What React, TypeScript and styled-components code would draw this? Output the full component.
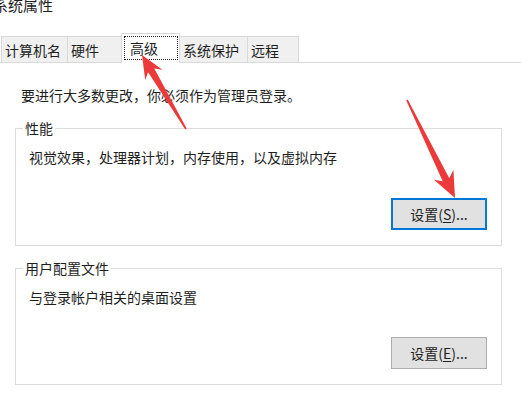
import React from "react";
import styled, { createGlobalStyle } from "styled-components";

const GlobalStyle = createGlobalStyle`
  * {
    box-sizing: border-box;
    margin: 0;
    padding: 0;
  }
  html, body {
    background: #ffffff;
  }
  body {
    margin: 0;
    font-family: "Noto Sans CJK SC", "Microsoft YaHei", sans-serif;
    color: #1e1e1e;
  }
`;

const Window = styled.div`
  position: relative;
  width: 521px;
  height: 393px;
  overflow: hidden;
  background: #ffffff;
  display: flex;
  flex-direction: column;
`;

const Title = styled.div`
  height: 36px;
  margin-top: -3px;
  margin-left: -7px;
  font-size: 15px;
  line-height: 15px;
  white-space: nowrap;
`;

const TabStrip = styled.div`
  display: flex;
  align-items: flex-end;
  height: 30px;
  padding-left: 1px;
  margin-bottom: -1px;
  position: relative;
  z-index: 1;
`;

const Tab = styled.div<{ $active?: boolean; $w: number }>`
  width: ${p => p.$w}px;
  height: ${p => (p.$active ? 30 : 26)}px;
  margin-bottom: ${p => (p.$active ? 0 : 1)}px;
  display: flex;
  align-items: ${p => (p.$active ? "flex-start" : "center")};
  padding: ${p => (p.$active ? "2px 0 0 2px" : "0 0 0 3px")};
  font-size: 14px;
  line-height: 14px;
  white-space: nowrap;
  background: ${p => (p.$active ? "#ffffff" : "#f0f0f0")};
  border: 1px solid #d9d9d9;
  border-bottom: none;
  & + & {
    margin-left: -1px;
  }
`;

const FocusRect = styled.span`
  width: 54px;
  height: 24px;
  border: 1px dotted #222;
  display: flex;
  align-items: center;
  padding-left: 5px;
`;

const Panel = styled.div`
  flex: 1;
  border-top: 1px solid #d9d9d9;
  padding: 25px 19px 0 15px;
`;

const Intro = styled.p`
  font-size: 14px;
  line-height: 14px;
  padding-left: 6px;
  margin-bottom: 19px;
  white-space: nowrap;
`;

const Group = styled.fieldset`
  border: 1px solid #dcdcdc;
  padding: 15px 14px 15px 13px;
  min-width: 0;
  & + & {
    margin-top: 15px;
  }
`;

const Legend = styled.legend`
  font-size: 14px;
  line-height: 14px;
  padding: 0 2px;
  margin-left: -6px;
`;

const Desc = styled.p`
  font-size: 14px;
  line-height: 14px;
  white-space: nowrap;
`;

const ButtonRow = styled.div<{ $gap: number }>`
  display: flex;
  justify-content: flex-end;
  margin-top: ${p => p.$gap}px;
`;

const Button = styled.button<{ $focused?: boolean }>`
  width: 96px;
  height: 32px;
  font-family: inherit;
  font-size: 14px;
  line-height: 14px;
  color: #1e1e1e;
  background: #e1e1e1;
  border: ${p => (p.$focused ? "2px solid #0078d7" : "1px solid #adadad")};
  display: flex;
  align-items: center;
  justify-content: center;
  u {
    text-decoration: underline;
    text-underline-offset: 2px;
  }
`;

const Overlay = styled.svg`
  position: absolute;
  top: 0;
  left: 0;
  pointer-events: none;
  z-index: 5;
`;

type Pt = [number, number];

// builds a tapered annotation arrow from tail to tip
function arrowPoints(tail: Pt, tip: Pt, headLen: number, headHalf: number) {
  const dx = tip[0] - tail[0];
  const dy = tip[1] - tail[1];
  const len = Math.hypot(dx, dy);
  const ux = dx / len;
  const uy = dy / len;
  const nx = -uy;
  const ny = ux;
  const bx = tip[0] - ux * headLen;
  const by = tip[1] - uy * headLen;
  const kx = tip[0] - ux * headLen * 0.78;
  const ky = tip[1] - uy * headLen * 0.78;
  const pts: Pt[] = [
    tip,
    [bx + nx * headHalf, by + ny * headHalf],
    [kx + nx * 3.6, ky + ny * 3.6],
    [tail[0] + nx * 0.8, tail[1] + ny * 0.8],
    [tail[0] - nx * 0.8, tail[1] - ny * 0.8],
    [kx - nx * 3.6, ky - ny * 3.6],
    [bx - nx * headHalf, by - ny * headHalf],
  ];
  return pts.map(p => `${p[0].toFixed(1)},${p[1].toFixed(1)}`).join(" ");
}

const tabs = [
  { label: "计算机名", w: 67 },
  { label: "硬件", w: 55 },
  { label: "高级", w: 59, active: true },
  { label: "系统保护", w: 69 },
  { label: "远程", w: 52 },
];

export default function App() {
  return (
    <>
      <GlobalStyle />
      <Window>
        <Title>系统属性</Title>
        <TabStrip>
          {tabs.map(t => (
            <Tab key={t.label} $w={t.w} $active={t.active}>
              {t.active ? <FocusRect>{t.label}</FocusRect> : t.label}
            </Tab>
          ))}
        </TabStrip>
        <Panel>
          <Intro>要进行大多数更改，你必须作为管理员登录。</Intro>
          <Group>
            <Legend>性能</Legend>
            <Desc>视觉效果，处理器计划，内存使用，以及虚拟内存</Desc>
            <ButtonRow $gap={34}>
              <Button $focused>
                设置(<u>S</u>)...
              </Button>
            </ButtonRow>
          </Group>
          <Group>
            <Legend>用户配置文件</Legend>
            <Desc>与登录帐户相关的桌面设置</Desc>
            <ButtonRow $gap={33}>
              <Button>
                设置(<u>E</u>)...
              </Button>
            </ButtonRow>
          </Group>
        </Panel>
        <Overlay width={521} height={393} viewBox="0 0 521 393">
          <polygon points={arrowPoints([186, 129], [142, 55], 23, 10)} fill="#ec3a3a" />
          <polygon points={arrowPoints([407, 100], [455, 198], 26, 11)} fill="#ec3a3a" />
        </Overlay>
      </Window>
    </>
  );
}
